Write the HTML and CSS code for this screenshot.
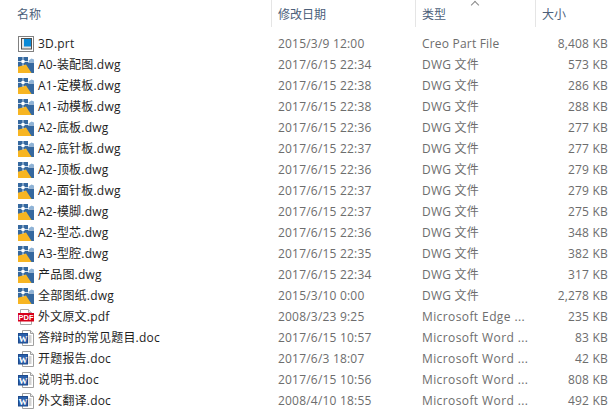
FILE: index.html
```html
<!DOCTYPE html>
<html lang="zh-CN">
<head>
<meta charset="utf-8">
<title>文件列表</title>
<link rel="stylesheet" href="styles.css">
</head>
<body>
<svg class="defs" width="0" height="0" aria-hidden="true">
<symbol id="prt" viewBox="0 0 16 16">
<rect x=".5" y=".5" width="15" height="15" fill="#fff" stroke="#808080" stroke-width="1"/>
<rect x="3.500" y="2.500" width="10" height="10.500" fill="#e4e4e4" stroke="#505050"/>
<rect x="6" y="3" width="7" height="7.500" fill="#0a8ad8"/>
</symbol>
<symbol id="dwg" viewBox="0 0 16 16">
<rect x="0" y="0" width="16" height="16" fill="#35689f"/>
<path d="M10 0h6v5.500h-6z" fill="#fff"/>
<path d="M10.500 3.500l3-2 2.500 1v2.500h-5z" fill="#8fb3d6"/>
<path d="M0 16V9.800L8 7.500 13.500 16Z" fill="#f7b522"/>
<path d="M0 4.500h10M5 0v9" stroke="#cfe0f0" fill="none"/>
<rect x="3.500" y="3" width="3" height="3" fill="#fff"/>
</symbol>
<symbol id="page-pdf" viewBox="0 0 16 16">
<path d="M2.500.5h8l3 3v12h-11z" fill="#fff" stroke="#a8a8a8"/>
<path d="M10.500.5v3h3" fill="#e8e8e8" stroke="#a8a8a8"/>
<rect x="0" y="4" width="16" height="8.500" fill="#d7001a"/>
</symbol>
<symbol id="page-doc" viewBox="0 0 16 16">
<path d="M4.500.5h8l3 3v12h-11z" fill="#fff" stroke="#a0a0a0"/>
<path d="M12.500.5v3h3" fill="#ececec" stroke="#a0a0a0"/>
<path d="M10.500 6h3M10.500 8h3M10.500 10h3M10.500 12h3" stroke="#a5a5a5"/>
<rect x=".5" y="3.500" width="9" height="9.500" fill="#2b5faa" stroke="#1d4a8c"/>
</symbol>
</svg>

<main class="list">
<div class="head">
<div class="head-cell name-head">名称</div>
<div class="head-cell sep">修改日期</div>
<div class="head-cell sep sorted">类型<span class="caret"></span></div>
<div class="head-cell sep">大小</div>
</div>
<div class="rows">
<div class="row"><div class="name"><svg class="icon"><use href="#prt"/></svg>3D.prt</div><div>2015/3/9 12:00</div><div>Creo Part File</div><div class="size">8,408 KB</div></div>
<div class="row"><div class="name"><svg class="icon"><use href="#dwg"/></svg>A0-装配图.dwg</div><div>2017/6/15 22:34</div><div>DWG 文件</div><div class="size">573 KB</div></div>
<div class="row"><div class="name"><svg class="icon"><use href="#dwg"/></svg>A1-定模板.dwg</div><div>2017/6/15 22:38</div><div>DWG 文件</div><div class="size">286 KB</div></div>
<div class="row"><div class="name"><svg class="icon"><use href="#dwg"/></svg>A1-动模板.dwg</div><div>2017/6/15 22:38</div><div>DWG 文件</div><div class="size">288 KB</div></div>
<div class="row"><div class="name"><svg class="icon"><use href="#dwg"/></svg>A2-底板.dwg</div><div>2017/6/15 22:36</div><div>DWG 文件</div><div class="size">277 KB</div></div>
<div class="row"><div class="name"><svg class="icon"><use href="#dwg"/></svg>A2-底针板.dwg</div><div>2017/6/15 22:37</div><div>DWG 文件</div><div class="size">277 KB</div></div>
<div class="row"><div class="name"><svg class="icon"><use href="#dwg"/></svg>A2-顶板.dwg</div><div>2017/6/15 22:36</div><div>DWG 文件</div><div class="size">279 KB</div></div>
<div class="row"><div class="name"><svg class="icon"><use href="#dwg"/></svg>A2-面针板.dwg</div><div>2017/6/15 22:37</div><div>DWG 文件</div><div class="size">279 KB</div></div>
<div class="row"><div class="name"><svg class="icon"><use href="#dwg"/></svg>A2-模脚.dwg</div><div>2017/6/15 22:37</div><div>DWG 文件</div><div class="size">275 KB</div></div>
<div class="row"><div class="name"><svg class="icon"><use href="#dwg"/></svg>A2-型芯.dwg</div><div>2017/6/15 22:36</div><div>DWG 文件</div><div class="size">348 KB</div></div>
<div class="row"><div class="name"><svg class="icon"><use href="#dwg"/></svg>A3-型腔.dwg</div><div>2017/6/15 22:35</div><div>DWG 文件</div><div class="size">382 KB</div></div>
<div class="row"><div class="name"><svg class="icon"><use href="#dwg"/></svg>产品图.dwg</div><div>2017/6/15 22:34</div><div>DWG 文件</div><div class="size">317 KB</div></div>
<div class="row"><div class="name"><svg class="icon"><use href="#dwg"/></svg>全部图纸.dwg</div><div>2015/3/10 0:00</div><div>DWG 文件</div><div class="size">2,278 KB</div></div>
<div class="row"><div class="name"><svg class="icon" viewBox="0 0 16 16"><use href="#page-pdf"/><text x="8" y="11" class="pdf-label">PDF</text></svg>外文原文.pdf</div><div>2008/3/23 9:25</div><div class="app">Microsoft Edge ...</div><div class="size">235 KB</div></div>
<div class="row"><div class="name"><svg class="icon" viewBox="0 0 16 16"><use href="#page-doc"/><text x="5" y="11.500" class="doc-label">W</text></svg>答辩时的常见题目.doc</div><div>2017/6/15 10:57</div><div class="app">Microsoft Word ...</div><div class="size">83 KB</div></div>
<div class="row"><div class="name"><svg class="icon" viewBox="0 0 16 16"><use href="#page-doc"/><text x="5" y="11.500" class="doc-label">W</text></svg>开题报告.doc</div><div>2017/6/3 18:07</div><div class="app">Microsoft Word ...</div><div class="size">42 KB</div></div>
<div class="row"><div class="name"><svg class="icon" viewBox="0 0 16 16"><use href="#page-doc"/><text x="5" y="11.500" class="doc-label">W</text></svg>说明书.doc</div><div>2017/6/15 10:56</div><div class="app">Microsoft Word ...</div><div class="size">808 KB</div></div>
<div class="row"><div class="name"><svg class="icon" viewBox="0 0 16 16"><use href="#page-doc"/><text x="5" y="11.500" class="doc-label">W</text></svg>外文翻译.doc</div><div>2008/4/10 18:55</div><div class="app">Microsoft Word ...</div><div class="size">492 KB</div></div>
</div>
</main>
</body>
</html>
```
FILE: styles.css
```css
* { box-sizing: border-box; }
html, body { margin: 0; height: 100%; overflow: hidden; background: #fff; }
body { font-family: "Open Sans", "Noto Sans CJK SC", sans-serif; font-size: 12px; color: #6d6d6d; }
.defs { display: block; height: 0; }
.list { padding-right: 5px; }
.head, .row { display: grid; grid-template-columns: 271px 144px 120px 73px; }
.head { height: 27px; color: #4c607a; }
.head-cell { height: 27px; padding-top: 2px; line-height: 26px; padding-left: 7px; position: relative; }
.name-head { padding-left: 17px; }
.sep { border-left: 1px solid #e5e5e5; padding-left: 6px; }
.caret { position: absolute; left: 56px; top: 2px; width: 6px; height: 6px; border-left: 1px solid #8a8a8a; border-top: 1px solid #8a8a8a; transform: rotate(45deg); }
.rows { padding-top: 6px; letter-spacing: 0.2px; }
.row { height: 21px; line-height: 21px; white-space: nowrap; }
.row > div:nth-child(2) { padding-left: 7px; }
.row > div:nth-child(3) { padding-left: 7px; }
.app { letter-spacing: 0.4px; }
.name { display: flex; align-items: center; padding-left: 18px; gap: 4px; color: #1e1e1e; }
.size { text-align: right; }
.icon { width: 16px; height: 16px; flex: none; }
.pdf-label { font: bold 7.500px "Liberation Sans", sans-serif; letter-spacing: 0; fill: #fff; text-anchor: middle; }
.doc-label { font: bold 9px "Liberation Serif", serif; letter-spacing: 0; fill: #fff; text-anchor: middle; }
```
